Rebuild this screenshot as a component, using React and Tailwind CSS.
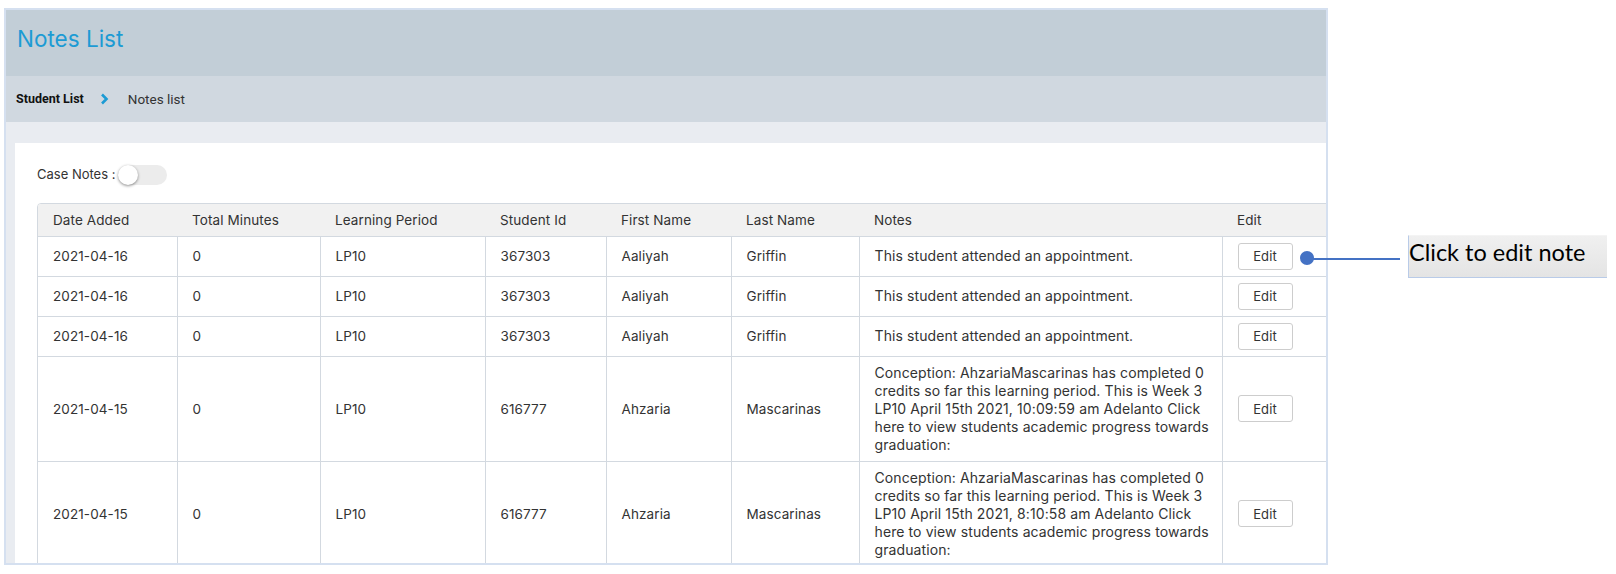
import React from 'react';

const longNote = (time) =>
  `Conception: AhzariaMascarinas has completed 0 credits so far this learning period. This is Week 3 LP10 April 15th 2021, ${time} am Adelanto Click here to view students academic progress towards graduation:`;

const rows = [
  { date: '2021-04-16', minutes: '0', period: 'LP10', id: '367303', first: 'Aaliyah', last: 'Griffin', notes: 'This student attended an appointment.' },
  { date: '2021-04-16', minutes: '0', period: 'LP10', id: '367303', first: 'Aaliyah', last: 'Griffin', notes: 'This student attended an appointment.' },
  { date: '2021-04-16', minutes: '0', period: 'LP10', id: '367303', first: 'Aaliyah', last: 'Griffin', notes: 'This student attended an appointment.' },
  { date: '2021-04-15', minutes: '0', period: 'LP10', id: '616777', first: 'Ahzaria', last: 'Mascarinas', notes: longNote('10:09:59') },
  { date: '2021-04-15', minutes: '0', period: 'LP10', id: '616777', first: 'Ahzaria', last: 'Mascarinas', notes: longNote('8:10:58') },
  { date: '2021-04-15', minutes: '0', period: 'LP10', id: '616777', first: 'Ahzaria', last: 'Mascarinas', notes: longNote('7:45:12') },
];

const columns = [
  { label: 'Date Added', width: 'w-[139px]' },
  { label: 'Total Minutes', width: 'w-[143px]' },
  { label: 'Learning Period', width: 'w-[165px]' },
  { label: 'Student Id', width: 'w-[121px]' },
  { label: 'First Name', width: 'w-[125px]' },
  { label: 'Last Name', width: 'w-[128px]' },
  { label: 'Notes', width: 'w-[363px]' },
  { label: 'Edit', width: 'w-[110px]' },
];

const border = 'border-l border-t border-[#d3d9e0] align-middle first:border-l-0';
const cell = `${border} px-[15px] py-[7px]`;

export default function App() {
  return (
    <div className="relative w-[1616px] h-[574px] bg-white overflow-hidden text-[#333] font-['Inter','Noto_Sans',sans-serif]">
      {/* page frame */}
      <div className="ml-[4px] mt-[8px] w-[1324px] h-[557px] border-2 border-[#d5e0f0] bg-[#e9ecf1] flex flex-col overflow-hidden">
        <div className="h-[66px] shrink-0 bg-[#c2ced7] px-[11px] pt-[14px]">
          <h1 className="text-[22.5px] leading-[30px] text-[#1c9bd4]">Notes List</h1>
        </div>
        <div className="h-[46px] shrink-0 bg-[#d0d8e0] flex items-center px-[10px] font-['Roboto',sans-serif]">
          <span className="text-[12.5px] font-bold text-[#111]">Student List</span>
          <svg className="ml-[16px] mr-[19px]" width="9" height="12" viewBox="0 0 9 12">
            <path d="M2 1.5 L6.5 6 L2 10.5" fill="none" stroke="#1c9bd4" strokeWidth="2.6" />
          </svg>
          <span className="text-[13.5px] text-[#333]">Notes list</span>
        </div>

        <div className="flex-1 pl-[9px] pt-[21px] min-h-0">
          <div className="h-full bg-white pl-[22px] pt-[22px] overflow-hidden">
            <div className="flex items-center h-[20px] text-[13px] text-[#333]">
              <span>Case Notes :</span>
              <div className="ml-[3px] relative w-[49px] h-[20px] rounded-full bg-[#ececec]">
                <div className="absolute left-0 top-0 w-[20px] h-[20px] rounded-full bg-white shadow-[0_1px_3px_rgba(0,0,0,0.45)]"></div>
              </div>
            </div>

            <div className="mt-[18px] w-[1300px] border border-[#d3d9e0] rounded-tl-[4px] overflow-hidden">
              <table className="table-fixed border-collapse text-[13.5px] leading-[18px] tracking-[0.1px]">
                <thead>
                  <tr className="bg-[#f1f1f1]">
                    {columns.map((c) => (
                      <th key={c.label} className={`${c.width} h-[32px] px-[15px] text-left font-normal align-middle`}>
                        {c.label}
                      </th>
                    ))}
                  </tr>
                </thead>
                <tbody>
                  {rows.map((r, i) => (
                    <tr key={i}>
                      <td className={cell}>{r.date}</td>
                      <td className={cell}>{r.minutes}</td>
                      <td className={cell}>{r.period}</td>
                      <td className={cell}>{r.id}</td>
                      <td className={cell}>{r.first}</td>
                      <td className={cell}>{r.last}</td>
                      <td className={`${border} pl-[15px] pr-[8px] py-[7px] text-[14px]`}>{r.notes}</td>
                      <td className={`${border} px-[15px] py-[6px]`}>
                        <button className="block w-[55px] h-[27px] border-[1.5px] border-[#cdcdcd] rounded-[3px] bg-white text-[13px] text-[#333]">
                          Edit
                        </button>
                      </td>
                    </tr>
                  ))}
                </tbody>
              </table>
            </div>
          </div>
        </div>
      </div>

      {/* annotation callout */}
      <div className="absolute left-[1300px] top-[251px] w-[14px] h-[14px] rounded-full bg-[#4472c4]"></div>
      <div className="absolute left-[1307px] top-[258px] w-[93px] h-[1.5px] bg-[#4472c4]"></div>
      <div className="absolute left-[1408px] top-[235px] w-[199px] h-[43px] bg-gradient-to-b from-[#f0f0f0] to-[#e4e4e4] border-l border-b border-[#b9cbe8] border-t border-t-[#f4f4f4]">
        <span className="block text-[23.5px] leading-[32px] text-black font-['Lato',sans-serif]">Click to edit note</span>
      </div>
    </div>
  );
}
